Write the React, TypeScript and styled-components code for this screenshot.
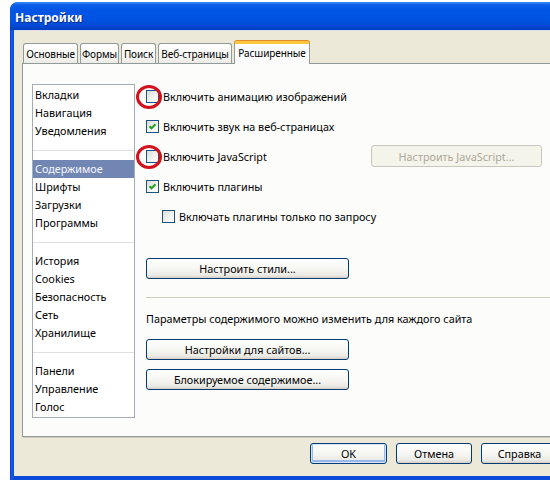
import React from 'react';
import styled, { createGlobalStyle, css } from 'styled-components';

const Global = createGlobalStyle`
  html, body { margin: 0; padding: 0; background: #ffffff; overflow: hidden; }
  body {
    font-family: "Noto Sans", "Liberation Sans", sans-serif;
    font-size: 10.8px;
    color: #000;
  }
  * { box-sizing: border-box; }
`;

const Window = styled.div`
  margin: 2px 0 0 10px;
  width: 560px;
  height: 478px;
  display: flex;
  flex-direction: column;
  background: linear-gradient(90deg, #0a3fd0 0px, #1a5cf0 2px, #0b48dc 4px);
  border-radius: 8px 8px 0 0;
  overflow: hidden;
`;

const TitleBar = styled.div`
  height: 28px;
  flex: none;
  display: flex;
  align-items: center;
  padding: 2px 0 0 5px;
  background: linear-gradient(
    180deg,
    #3d8cf5 0px,
    #0a5ee8 3px,
    #0055e5 8px,
    #0053e2 18px,
    #0049d5 24px,
    #003cbf 28px
  );
`;

const Title = styled.span`
  font-family: "Noto Sans", "Liberation Sans", sans-serif;
  font-weight: bold;
  font-size: 12px;
  color: #ffffff;
  text-shadow: 1px 1px 0 #0a2a8a;
`;

const Body = styled.div`
  flex: 1;
  margin: 0 4px 4px 4px;
  background: #ece9d8;
  border-top: 1px solid #d8e0f0;
  display: flex;
  flex-direction: column;
  padding: 10px 8px 0 8px;
`;

const TabStrip = styled.div`
  display: flex;
  align-items: flex-end;
  height: 22px;
  padding-left: 1px;
  gap: 2px;
  position: relative;
  z-index: 1;
`;

const Tab = styled.div<{ $w: number; $active?: boolean }>`
  width: ${(p) => p.$w}px;
  height: 20px;
  padding: 0;
  display: flex;
  align-items: center;
  justify-content: center;
  white-space: nowrap;
  font-size: 10px;
  letter-spacing: -0.1px;
  border: 1px solid #919b9c;
  border-bottom: none;
  border-radius: 3px 3px 0 0;
  background: linear-gradient(180deg, #ffffff 0%, #f7f7f4 60%, #ecebe5 100%);
  color: #000;
  ${(p) =>
    p.$active &&
    css`
      height: 23px;
      margin-bottom: -1px;
      background: #fcfcfe;
      border-top: 3px solid #ffc73c;
      box-shadow: 0 -1px 0 #e68b2c;
      padding-bottom: 2px;
    `}
`;

const Panel = styled.div`
  height: 374px;
  flex: none;
  border: 1px solid #919b9c;
  background: #fcfcfb;
  box-shadow: 1px 1px 0 #d0cdbf;
  display: flex;
  align-items: flex-start;
  padding: 17px 0 0 9px;
`;

const List = styled.div`
  width: 103px;
  height: 334px;
  margin-top: 3px;
  flex: none;
  border: 1px solid #a5acb5;
  background: #ffffff;
  padding-top: 1px;
  display: flex;
  flex-direction: column;
`;

const ListItem = styled.div<{ $selected?: boolean }>`
  height: 18px;
  line-height: 18px;
  padding-left: 2px;
  white-space: nowrap;
  color: #000;
  ${(p) =>
    p.$selected &&
    css`
      background: #7286b4;
      color: #f4f6fc;
    `}
`;

const ListSep = styled.div`
  height: 20px;
  display: flex;
  align-items: center;
  &::after {
    content: '';
    display: block;
    width: 100%;
    height: 1px;
    background: #e0e0e0;
  }
`;

const Content = styled.div`
  flex: 1;
  margin-left: 11px;
  display: flex;
  flex-direction: column;
`;

const CheckRow = styled.div<{ $indent?: boolean }>`
  height: 30px;
  display: flex;
  align-items: center;
  padding-left: ${(p) => (p.$indent ? 16 : 0)}px;
  white-space: nowrap;
`;

const BoxWrap = styled.span`
  position: relative;
  width: 13px;
  height: 13px;
  flex: none;
  margin-right: 4px;
`;

const Box = styled.span`
  display: block;
  width: 13px;
  height: 13px;
  border: 1px solid #1c5180;
  background: linear-gradient(135deg, #dcdcd7 0%, #f4f4f0 60%, #ffffff 100%);
`;

const Circle = styled.span`
  position: absolute;
  left: -10px;
  top: -5px;
  width: 26px;
  height: 24px;
  border: 3px solid #d3101c;
  border-radius: 50%;
`;

const Button = styled.button<{ $w?: number; $default?: boolean }>`
  width: ${(p) => (p.$w ? `${p.$w}px` : 'auto')};
  height: 21px;
  flex: none;
  padding: 0;
  font-family: inherit;
  font-size: 10.8px;
  color: #000;
  border: 1px solid #003c74;
  border-radius: 3px;
  background: linear-gradient(180deg, #ffffff 0%, #f5f5f1 55%, #ebeae4 85%, #d6d0c5 100%);
  white-space: nowrap;
  ${(p) =>
    p.$default &&
    css`
      box-shadow: inset 0 0 0 1px #cee7ff, inset 0 -1px 0 2px #98b8ea;
    `}
  &:disabled {
    border-color: #c9c7ba;
    background: #f5f4ea;
    color: #aca899;
  }
`;

const JsButton = styled(Button)`
  margin-left: auto;
  margin-right: 15px;
  height: 22px;
`;

const Divider = styled.div`
  height: 1px;
  background: #d0d0bf;
  margin-top: 18px;
`;

const Note = styled.div`
  line-height: 16px;
  margin-top: 13px;
  white-space: nowrap;
`;

const Footer = styled.div`
  display: flex;
  justify-content: flex-end;
  gap: 9px;
  padding: 6px 0 0 0;
`;

const Stack = styled.div<{ $top: number }>`
  margin-top: ${(p) => p.$top}px;
  display: flex;
`;

function Check({ checked, circled }: { checked?: boolean; circled?: boolean }) {
  return (
    <BoxWrap>
      <Box>
        {checked && (
          <svg width="11" height="11" viewBox="0 0 11 11" style={{ display: 'block' }}>
            <polyline points="2.5,5.2 4.5,7.3 8.5,3.2" fill="none" stroke="#21a121" strokeWidth="2" />
          </svg>
        )}
      </Box>
      {circled && <Circle />}
    </BoxWrap>
  );
}

export default function App() {
  return (
    <>
      <Global />
      <Window>
        <TitleBar>
          <Title>Настройки</Title>
        </TitleBar>
        <Body>
          <TabStrip>
            <Tab $w={55}>Основные</Tab>
            <Tab $w={39}>Формы</Tab>
            <Tab $w={35}>Поиск</Tab>
            <Tab $w={74}>Веб-страницы</Tab>
            <Tab $w={76} $active>
              Расширенные
            </Tab>
          </TabStrip>
          <Panel>
            <List>
              <ListItem>Вкладки</ListItem>
              <ListItem>Навигация</ListItem>
              <ListItem>Уведомления</ListItem>
              <ListSep />
              <ListItem $selected>Содержимое</ListItem>
              <ListItem>Шрифты</ListItem>
              <ListItem>Загрузки</ListItem>
              <ListItem>Программы</ListItem>
              <ListSep />
              <ListItem>История</ListItem>
              <ListItem>Cookies</ListItem>
              <ListItem>Безопасность</ListItem>
              <ListItem>Сеть</ListItem>
              <ListItem>Хранилище</ListItem>
              <ListSep />
              <ListItem>Панели</ListItem>
              <ListItem>Управление</ListItem>
              <ListItem>Голос</ListItem>
            </List>
            <Content>
              <CheckRow>
                <Check circled />
                Включить анимацию изображений
              </CheckRow>
              <CheckRow>
                <Check checked />
                Включить звук на веб-страницах
              </CheckRow>
              <CheckRow>
                <Check circled />
                Включить JavaScript
                <JsButton $w={171} disabled>
                  Настроить JavaScript...
                </JsButton>
              </CheckRow>
              <CheckRow>
                <Check checked />
                Включить плагины
              </CheckRow>
              <CheckRow $indent>
                <Check />
                Включать плагины только по запросу
              </CheckRow>
              <Stack $top={27}>
                <Button $w={203}>Настроить стили...</Button>
              </Stack>
              <Divider />
              <Note>Параметры содержимого можно изменить для каждого сайта</Note>
              <Stack $top={12}>
                <Button $w={203}>Настройки для сайтов...</Button>
              </Stack>
              <Stack $top={9}>
                <Button $w={203}>Блокируемое содержимое...</Button>
              </Stack>
            </Content>
          </Panel>
          <Footer>
            <Button $w={77} $default>
              OK
            </Button>
            <Button $w={76}>Отмена</Button>
            <Button $w={77}>Справка</Button>
          </Footer>
        </Body>
      </Window>
    </>
  );
}
